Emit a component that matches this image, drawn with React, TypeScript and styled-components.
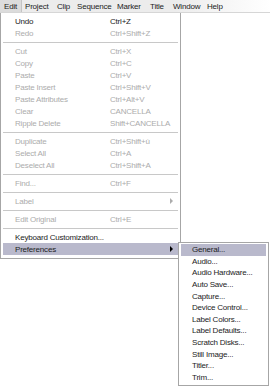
import React from "react";
import styled, { createGlobalStyle } from "styled-components";

const GlobalStyle = createGlobalStyle`
  html, body {
    margin: 0;
    padding: 0;
    background: #ffffff;
  }
  body {
    width: 270px;
    height: 388px;
    overflow: hidden;
    font-family: "Liberation Sans", Arial, sans-serif;
    font-size: 8px;
    letter-spacing: -0.2px;
    color: #1c1c1c;
  }
`;

const Page = styled.div`
  width: 270px;
  height: 388px;
  display: flex;
  flex-direction: column;
`;

const MenuBar = styled.div`
  height: 13px;
  display: flex;
  align-items: stretch;
  background: linear-gradient(to right, #ececec 0%, #ececec 65%, #ffffff 100%);
  border-bottom: 1px solid #d6d6d6;
  box-sizing: border-box;
`;

const BarItem = styled.div<{ $open?: boolean; $w: number }>`
  width: ${(p) => p.$w}px;
  display: flex;
  align-items: center;
  padding-left: ${(p) => (p.$open ? 4 : 3)}px;
  box-sizing: border-box;
  background: ${(p) => (p.$open ? "#dcdcdc" : "transparent")};
  border-right: ${(p) => (p.$open ? "1px solid #c4c4c4" : "none")};
`;

const Dropdown = styled.div`
  position: relative;
  width: 181px;
  background: #ffffff;
  border: 1px solid #a6a6a6;
  border-top: none;
  box-sizing: border-box;
  padding: 2px 2px 3px 2px;
`;

const Row = styled.div<{ $disabled?: boolean; $active?: boolean }>`
  position: relative;
  height: 12px;
  display: grid;
  grid-template-columns: 95px 1fr 8px;
  align-items: center;
  padding-left: 12px;
  color: ${(p) => (p.$disabled ? "#acacac" : "#1c1c1c")};
  background: ${(p) => (p.$active ? "#b9b9cc" : "transparent")};
  white-space: nowrap;
`;

const Shortcut = styled.span``;

const Arrow = styled.span<{ $disabled?: boolean }>`
  width: 0;
  height: 0;
  border-top: 3px solid transparent;
  border-bottom: 3px solid transparent;
  border-left: 3px solid ${(p) => (p.$disabled ? "#acacac" : "#000000")};
`;

const Separator = styled.div`
  height: 6px;
  display: flex;
  align-items: center;
  &::after {
    content: "";
    flex: 1;
    height: 1px;
    background: #c8c8c8;
  }
`;

const SubMenu = styled.div`
  position: absolute;
  left: 175px;
  top: -1px;
  width: 91px;
  background: #ffffff;
  border: 1px solid #a6a6a6;
  box-sizing: border-box;
  padding: 1px 2px 2px 2px;
  color: #1c1c1c;
`;

const SubRow = styled.div<{ $active?: boolean }>`
  height: 11.6px;
  display: flex;
  align-items: center;
  padding-left: 11px;
  white-space: nowrap;
  background: ${(p) => (p.$active ? "#b9b9cc" : "transparent")};
`;

type Item =
  | { sep: true }
  | { label: string; key?: string; disabled?: boolean; sub?: boolean; active?: boolean };

const items: Item[] = [
  { label: "Undo", key: "Ctrl+Z" },
  { label: "Redo", key: "Ctrl+Shift+Z", disabled: true },
  { sep: true },
  { label: "Cut", key: "Ctrl+X", disabled: true },
  { label: "Copy", key: "Ctrl+C", disabled: true },
  { label: "Paste", key: "Ctrl+V", disabled: true },
  { label: "Paste Insert", key: "Ctrl+Shift+V", disabled: true },
  { label: "Paste Attributes", key: "Ctrl+Alt+V", disabled: true },
  { label: "Clear", key: "CANCELLA", disabled: true },
  { label: "Ripple Delete", key: "Shift+CANCELLA", disabled: true },
  { sep: true },
  { label: "Duplicate", key: "Ctrl+Shift+ù", disabled: true },
  { label: "Select All", key: "Ctrl+A", disabled: true },
  { label: "Deselect All", key: "Ctrl+Shift+A", disabled: true },
  { sep: true },
  { label: "Find...", key: "Ctrl+F", disabled: true },
  { sep: true },
  { label: "Label", disabled: true, sub: true },
  { sep: true },
  { label: "Edit Original", key: "Ctrl+E", disabled: true },
  { sep: true },
  { label: "Keyboard Customization..." },
  { label: "Preferences", sub: true, active: true },
];

const prefs = [
  "General...",
  "Audio...",
  "Audio Hardware...",
  "Auto Save...",
  "Capture...",
  "Device Control...",
  "Label Colors...",
  "Label Defaults...",
  "Scratch Disks...",
  "Still Image...",
  "Titler...",
  "Trim...",
];

const bar: [string, number][] = [
  ["Edit", 22],
  ["Project", 32],
  ["Clip", 20],
  ["Sequence", 40],
  ["Marker", 33],
  ["Title", 23],
  ["Window", 34],
  ["Help", 30],
];

export default function App() {
  return (
    <Page>
      <GlobalStyle />
      <MenuBar>
        {bar.map(([name, w], i) => (
          <BarItem key={name} $w={w} $open={i === 0}>
            {name}
          </BarItem>
        ))}
      </MenuBar>
      <Dropdown>
        {items.map((it, i) =>
          "sep" in it ? (
            <Separator key={i} />
          ) : (
            <Row key={i} $disabled={it.disabled} $active={it.active}>
              <span>{it.label}</span>
              <Shortcut>{it.key}</Shortcut>
              {it.sub ? <Arrow $disabled={it.disabled} /> : <span />}
              {it.active && (
                <SubMenu>
                  {prefs.map((p, j) => (
                    <SubRow key={p} $active={j === 0}>
                      {p}
                    </SubRow>
                  ))}
                </SubMenu>
              )}
            </Row>
          )
        )}
      </Dropdown>
    </Page>
  );
}
